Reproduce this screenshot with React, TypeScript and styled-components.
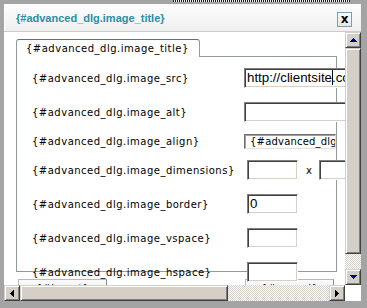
import React from "react";
import styled, { createGlobalStyle } from "styled-components";

const Global = createGlobalStyle`
  html, body { margin: 0; padding: 0; }
  body { width: 367px; height: 308px; overflow: hidden; background: #a4a4a4; }
`;

const Backdrop = styled.div`
  box-sizing: border-box;
  width: 367px;
  height: 308px;
  padding: 4px 6px 7px 4px;
  background-color: #a4a4a4;
  background-image: repeating-linear-gradient(90deg, #1a1a1a 0 1px, #f2f2f2 1px 2px);
  background-size: 177px 2px;
  background-position: 173px 0;
  background-repeat: no-repeat;
`;

const Dialog = styled.div`
  display: flex;
  flex-direction: column;
  width: 357px;
  height: 297px;
  background: #fff;
`;

const TitleBar = styled.div`
  box-sizing: border-box;
  height: 28px;
  flex: none;
  display: flex;
  align-items: center;
  padding: 0 9px 0 12px;
  border-bottom: 1px solid #cbcbcb;
  background: linear-gradient(#fdfdfd, #efefef);
  box-shadow: inset 1px 1px 0 #fff;
`;

const Title = styled.div`
  flex: 1;
  font: bold 11px "Liberation Sans", Arial, sans-serif;
  color: #2d8ea2;
  white-space: nowrap;
`;

const CloseButton = styled.div`
  box-sizing: border-box;
  width: 15px;
  height: 15px;
  margin-top: 4px;
  display: flex;
  align-items: center;
  justify-content: center;
  border: 1px solid #7f9bb0;
  background: linear-gradient(#ffffff, #e4e4e4);
  font: bold 12px "DejaVu Sans", Verdana, sans-serif;
  line-height: 1;
  color: #000;
  padding-bottom: 2px;
`;

const Body = styled.div`
  display: grid;
  grid-template-columns: 341px 16px;
  grid-template-rows: 253px 16px;
`;

const Viewport = styled.div`
  overflow: hidden;
  min-width: 0;
  background: #fff;
`;

const Page = styled.div`
  width: 520px;
  padding: 7px 0 0 12px;
  font: 10px "DejaVu Sans", Verdana, sans-serif;
  color: #000;
`;

const TabStrip = styled.div`
  display: flex;
  width: 321px;
  height: 18px;
`;

const Tab = styled.div`
  box-sizing: border-box;
  height: 18px;
  padding: 0 10px 0 9px;
  display: flex;
  align-items: center;
  border: 1px solid #919b9c;
  border-top-color: #5f6f7c;
  border-bottom: none;
  border-radius: 3px 3px 0 0;
  background: #fff;
  letter-spacing: 0.5px;
  white-space: nowrap;
`;

const TabFiller = styled.div`
  flex: 1;
  border-bottom: 1px solid #919b9c;
`;

const Panel = styled.div`
  box-sizing: border-box;
  width: 321px;
  height: 215px;
  padding: 4px 0 0 15px;
  border: 1px solid #919b9c;
  border-top: none;
`;

const Row = styled.div<{ $compact?: boolean }>`
  display: grid;
  grid-template-columns: 212px auto;
  align-items: center;
  height: ${(p) => (p.$compact ? 24 : 34)}px;
`;

const Label = styled.div`
  letter-spacing: 0.5px;
  white-space: nowrap;
  padding-top: 1px;
`;

const Controls = styled.div`
  display: flex;
  align-items: center;
  min-width: 0;
`;

const TextBox = styled.div<{ $w: number; $indent?: boolean }>`
  position: relative;
  z-index: 1;
  box-sizing: border-box;
  flex: none;
  width: ${(p) => p.$w}px;
  height: 20px;
  margin-left: ${(p) => (p.$indent ? 3 : 0)}px;
  padding: 0 2px;
  border: 1px solid;
  border-color: #808080 #ffffff #ffffff #808080;
  box-shadow: inset 1px 1px 0 #404040, inset -1px -1px 0 #d4d0c8;
  background: #fff;
  font: 13.3px "Liberation Sans", Arial, sans-serif;
  line-height: 18px;
  color: #000;
  white-space: nowrap;
  overflow: hidden;
`;

const Caret = styled.span`
  display: inline-block;
  width: 1px;
  height: 15px;
  background: #000;
  margin-right: -1px;
  vertical-align: -3px;
`;

const SelectBox = styled.div`
  box-sizing: border-box;
  width: 200px;
  height: 15px;
  padding: 0 5px;
  display: flex;
  align-items: center;
  border: 1px solid;
  border-color: #6e6e6e #e0e0e0 #e0e0e0 #6e6e6e;
  box-shadow: inset 1px 1px 0 #a0a0a0;
  letter-spacing: 0.2px;
  white-space: nowrap;
  overflow: hidden;
`;

const Times = styled.span`
  margin: 0 7px 0 8px;
  font-size: 10px;
`;

const ActionBar = styled.div`
  display: flex;
  justify-content: space-between;
  width: 321px;
  box-sizing: border-box;
  padding: 0 3px 0 2px;
  margin-top: 7px;
`;

const ActionButton = styled.div`
  box-sizing: border-box;
  width: 89px;
  height: 22px;
  padding-top: 3px;
  text-align: center;
  line-height: 12px;
  border: 1px solid #b9b9b9;
  border-right-color: #8a8a8a;
  border-bottom-color: #8a8a8a;
  background: linear-gradient(#fbfbfb, #e9e9e9);
  letter-spacing: 0.5px;
`;

const VScroll = styled.div`
  display: flex;
  flex-direction: column;
`;

const HScroll = styled.div`
  display: flex;
`;

const raised = `
  box-sizing: border-box;
  background: #d4d0c8;
  border: 1px solid;
  border-color: #d4d0c8 #404040 #404040 #d4d0c8;
  box-shadow: inset 1px 1px 0 #fff, inset -1px -1px 0 #808080;
`;

const ScrollButton = styled.div`
  ${raised}
  flex: none;
  width: 16px;
  height: 16px;
  display: flex;
  align-items: center;
  justify-content: center;
`;

const Thumb = styled.div<{ $vertical?: boolean; $size: number }>`
  ${raised}
  flex: none;
  width: ${(p) => (p.$vertical ? "16px" : `${p.$size}px`)};
  height: ${(p) => (p.$vertical ? `${p.$size}px` : "16px")};
`;

const Track = styled.div`
  flex: 1;
  background: repeating-conic-gradient(#d4d0c8 0 25%, #ffffff 0 50%) 0 0 / 2px 2px;
`;

const Corner = styled.div`
  background: #fff;
`;

type Dir = "up" | "down" | "left" | "right";

const Arrow = ({ dir, color }: { dir: Dir; color: string }) => {
  const rows = [0, 1, 2, 3];
  if (dir === "up" || dir === "down") {
    return (
      <svg width="7" height="4" viewBox="0 0 7 4" shapeRendering="crispEdges">
        {rows.map((i) => (
          <rect key={i} x={3 - i} y={dir === "up" ? i : 3 - i} width={2 * i + 1} height={1} fill={color} />
        ))}
      </svg>
    );
  }
  return (
    <svg width="4" height="7" viewBox="0 0 4 7" shapeRendering="crispEdges">
      {rows.map((i) => (
        <rect key={i} y={3 - i} x={dir === "left" ? i : 3 - i} height={2 * i + 1} width={1} fill={color} />
      ))}
    </svg>
  );
};

export default function App() {
  return (
    <>
      <Global />
      <Backdrop>
        <Dialog>
          <TitleBar>
            <Title>{"{#advanced_dlg.image_title}"}</Title>
            <CloseButton>x</CloseButton>
          </TitleBar>
          <Body>
            <Viewport>
              <Page>
                <TabStrip>
                  <Tab>{"{#advanced_dlg.image_title}"}</Tab>
                  <TabFiller />
                </TabStrip>
                <Panel>
                  <Row>
                    <Label>{"{#advanced_dlg.image_src}"}</Label>
                    <Controls>
                      <TextBox $w={250}>
                        http://clientsite
                        <Caret />
                        .com/images/logo.gif
                      </TextBox>
                    </Controls>
                  </Row>
                  <Row>
                    <Label>{"{#advanced_dlg.image_alt}"}</Label>
                    <Controls>
                      <TextBox $w={250} />
                    </Controls>
                  </Row>
                  <Row $compact>
                    <Label>{"{#advanced_dlg.image_align}"}</Label>
                    <Controls>
                      <SelectBox>{"{#advanced_dlg.image_align_default}"}</SelectBox>
                    </Controls>
                  </Row>
                  <Row>
                    <Label>{"{#advanced_dlg.image_dimensions}"}</Label>
                    <Controls>
                      <TextBox $w={51} $indent />
                      <Times>x</Times>
                      <TextBox $w={51} />
                    </Controls>
                  </Row>
                  <Row>
                    <Label>{"{#advanced_dlg.image_border}"}</Label>
                    <Controls>
                      <TextBox $w={51} $indent>0</TextBox>
                    </Controls>
                  </Row>
                  <Row>
                    <Label>{"{#advanced_dlg.image_vspace}"}</Label>
                    <Controls>
                      <TextBox $w={51} $indent />
                    </Controls>
                  </Row>
                  <Row>
                    <Label>{"{#advanced_dlg.image_hspace}"}</Label>
                    <Controls>
                      <TextBox $w={51} $indent />
                    </Controls>
                  </Row>
                </Panel>
                <ActionBar>
                  <ActionButton>{"{#insert}"}</ActionButton>
                  <ActionButton>{"{#cancel}"}</ActionButton>
                </ActionBar>
              </Page>
            </Viewport>
            <VScroll>
              <ScrollButton>
                <Arrow dir="up" color="#000080" />
              </ScrollButton>
              <Thumb $vertical $size={206} />
              <Track />
              <ScrollButton>
                <Arrow dir="down" color="#000080" />
              </ScrollButton>
            </VScroll>
            <HScroll>
              <ScrollButton>
                <Arrow dir="left" color="#000" />
              </ScrollButton>
              <Thumb $size={208} />
              <Track />
              <ScrollButton>
                <Arrow dir="right" color="#000" />
              </ScrollButton>
            </HScroll>
            <Corner />
          </Body>
        </Dialog>
      </Backdrop>
    </>
  );
}
